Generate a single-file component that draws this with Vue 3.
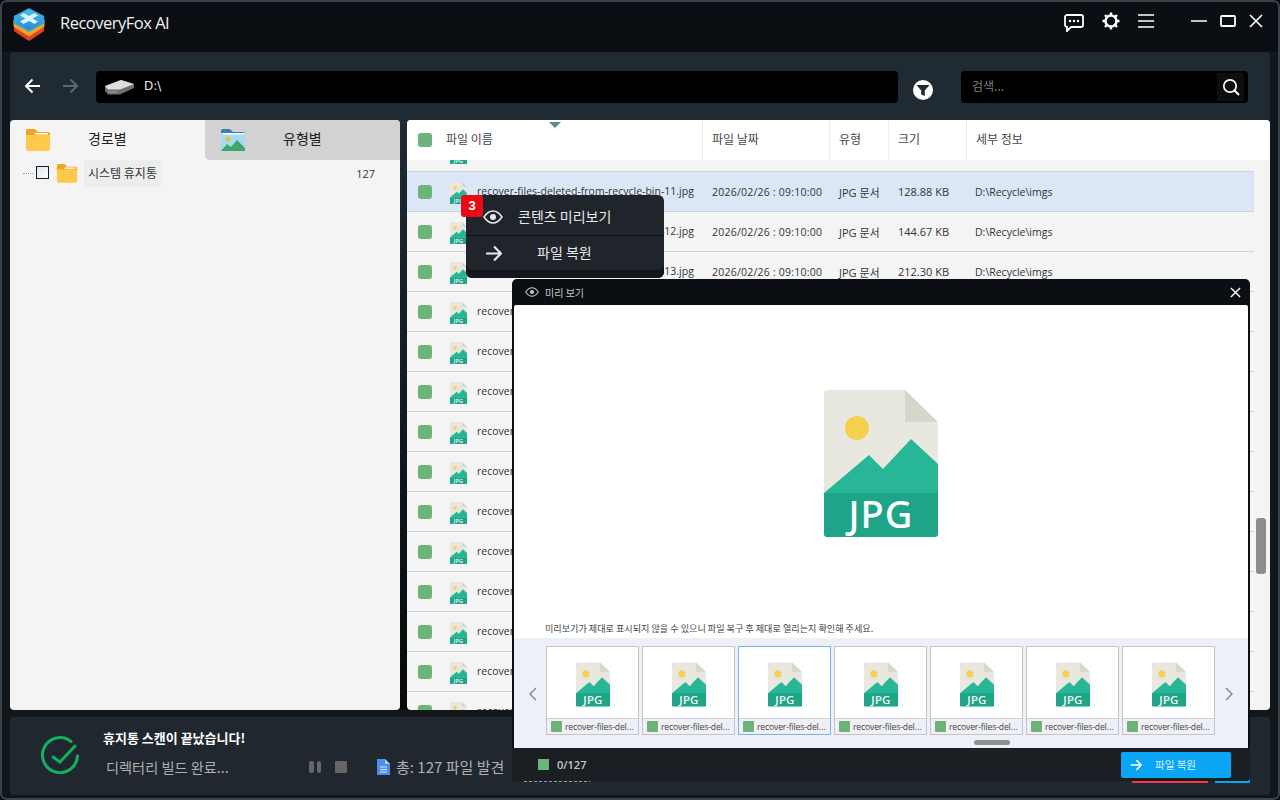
<script setup>
const rows = Array.from({ length: 15 }, (_, i) => ({
  id: i,
  name: `recover-files-deleted-from-recycle-bin-${i + 10}.jpg`,
  size: ['98.41 KB', '128.88 KB', '144.67 KB', '212.30 KB'][i] || '156.20 KB',
  selected: i === 1,
}))
const thumbs = [0, 1, 2, 3, 4, 5, 6]
</script>

<template>
  <div class="app">
    <svg class="defs" width="0" height="0" aria-hidden="true">
      <defs>
        <symbol id="jpg" viewBox="0 0 114 147">
          <path d="M3 0H81L114 33V144a3 3 0 0 1-3 3H3a3 3 0 0 1-3-3V3a3 3 0 0 1 3-3Z" fill="#e9e8e0" />
          <path d="M81 0L114 32H81Z" fill="#d6d6ca" />
          <circle cx="33" cy="38" r="12" fill="#f5d04f" />
          <path d="M0 103L45 65L59 79L87 49L114 74V105H0Z" fill="#28b796" />
          <path d="M0 103H114V144a3 3 0 0 1-3 3H3a3 3 0 0 1-3-3Z" fill="#1ea588" />
          <text x="57" y="138" text-anchor="middle" font-family="Noto Sans, sans-serif" font-size="38" font-weight="500" letter-spacing="1" fill="#fff">JPG</text>
        </symbol>
        <symbol id="folder" viewBox="0 0 26 23">
          <path d="M1 3a2 2 0 0 1 2-2h7l3 3h10a2 2 0 0 1 2 2v3H1Z" fill="#eba51f" />
          <path d="M1 7h24v14a2 2 0 0 1-2 2H3a2 2 0 0 1-2-2Z" fill="#ffc94d" />
          <rect x="10" y="5" width="13" height="1.500" fill="#fff" />
        </symbol>
        <symbol id="eye" viewBox="0 0 20 14">
          <path d="M1 7C4 2.500 7 1 10 1s6 1.500 9 6c-3 4.500-6 6-9 6S4 11.500 1 7Z" fill="none" stroke="currentColor" stroke-width="1.500" />
          <circle cx="10" cy="7" r="3" fill="currentColor" />
        </symbol>
        <symbol id="arrow" viewBox="0 0 16 16">
          <path d="M1 8H15M8.500 1.500L15 8L8.500 14.500" fill="none" stroke="currentColor" stroke-width="2" />
        </symbol>
        <linearGradient id="cube" x1="0" y1="0" x2="0" y2="1">
          <stop offset="0" stop-color="#4cc3ee" />
          <stop offset="1" stop-color="#2386cc" />
        </linearGradient>
      </defs>
    </svg>

    <header class="titlebar">
      <div class="brand">
        <svg class="logo" viewBox="0 0 32 33">
          <path d="M1.500 16V23L16 32.500L30.500 23V16Z" fill="#e2431f" stroke="#e2431f" stroke-linejoin="round" />
          <path d="M1 12V18.500L16 28L31 18.500V12Z" fill="#f4a425" stroke="#f4a425" stroke-linejoin="round" />
          <path d="M16 1L30.500 8.500V15L16 23L1.500 15V8.500Z" fill="url(#cube)" stroke="#38a6e0" stroke-width="1.500" stroke-linejoin="round" />
          <path d="M10.500 5L16 8L21.500 5L25 7.500L19.500 10.500L25 13.500L21.500 16L16 13L10.500 16L7 13.500L12.500 10.500L7 7.500Z" fill="#d9f2fb" />
        </svg>
        <span class="app-name">RecoveryFox AI</span>
      </div>
      <div class="win-tools">
        <svg class="ti chat" viewBox="0 0 20 18"><path d="M3 1H17a2 2 0 0 1 2 2V11a2 2 0 0 1-2 2H7L3 17V13a2 2 0 0 1-2-2V3a2 2 0 0 1 2-2Z" fill="none" stroke="#fff" stroke-width="1.800" /><circle cx="6" cy="7" r="1.200" fill="#fff" /><circle cx="10" cy="7" r="1.200" fill="#fff" /><circle cx="14" cy="7" r="1.200" fill="#fff" /></svg>
        <svg class="ti gear" viewBox="0 0 18 18"><circle cx="9" cy="9" r="5.500" fill="none" stroke="#fff" stroke-width="2.500" /><path d="M9 .5V3M9 15V17.500M.5 9H3M15 9H17.500M3 3L4.800 4.800M13.200 13.200L15 15M15 3L13.200 4.800M4.800 13.200L3 15" stroke="#fff" stroke-width="2.400" /></svg>
        <svg class="ti menu" viewBox="0 0 16 14"><path d="M0 1H16M0 7H16M0 13H16" stroke="#fff" stroke-width="1.500" /></svg>
        <svg class="ti min" viewBox="0 0 16 14"><path d="M0 7H16" stroke="#fff" stroke-width="1.500" /></svg>
        <svg class="ti max" viewBox="0 0 16 12"><rect x="1" y="1" width="14" height="10" rx="1" fill="none" stroke="#fff" stroke-width="1.800" /></svg>
        <svg class="ti close" viewBox="0 0 14 14"><path d="M1 1L13 13M13 1L1 13" stroke="#fff" stroke-width="1.600" /></svg>
      </div>
    </header>

    <main class="main">
      <section class="toolbar">
        <svg class="nav back"><use href="#arrow" /></svg>
        <svg class="nav fwd"><use href="#arrow" /></svg>
        <div class="address">
          <svg class="drive" viewBox="0 0 30 15">
            <path d="M0 6L16 0L29 4V8L15 14.500H3L0 11Z" fill="#6f6f6f" />
            <path d="M0 6L16 0L29 4L15 9.500H3Z" fill="#dedede" />
            <path d="M3 12H12" stroke="#a8a8a8" stroke-width="1" />
          </svg>
          <span class="path">D:\</span>
        </div>
        <span class="filter">
          <svg viewBox="0 0 20 20"><circle cx="10" cy="10" r="10" fill="#fff" /><path d="M3.500 5H16.500L11.800 10.500V16L8.200 14.500V10.500Z" fill="#1f2a33" /></svg>
        </span>
        <div class="search">
          <span class="placeholder">검색...</span>
          <span class="search-btn">
            <svg viewBox="0 0 18 18"><circle cx="8" cy="8" r="6.200" fill="none" stroke="#fff" stroke-width="1.700" /><path d="M12.500 12.500L17 17" stroke="#fff" stroke-width="1.900" /></svg>
          </span>
        </div>
      </section>

      <section class="panels">
        <aside class="left">
          <div class="tabs">
            <div class="tab active">
              <svg class="tab-icon"><use href="#folder" /></svg>
              <span>경로별</span>
            </div>
            <div class="tab inactive">
              <svg class="tab-icon" viewBox="0 0 26 23">
                <path d="M1 3a2 2 0 0 1 2-2h7l3 3h10a2 2 0 0 1 2 2v1H1Z" fill="#3f7cb5" />
                <rect x="1" y="5" width="24" height="18" rx="1" fill="#a3dcef" />
                <rect x="2" y="5" width="22" height="1.500" fill="#fff" />
                <circle cx="8" cy="11" r="2.500" fill="#f5b93d" />
                <path d="M1 23L7 16L11 19L17 12L25 20V23Z" fill="#3da66b" />
              </svg>
              <span>유형별</span>
            </div>
          </div>
          <div class="tree-row">
            <span class="dots"></span>
            <span class="tree-check"></span>
            <svg class="tree-folder"><use href="#folder" /></svg>
            <span class="tree-label">시스템 휴지통</span>
            <span class="tree-count">127</span>
          </div>
        </aside>

        <div class="right">
          <span class="sort"></span>
          <div class="thead">
            <div class="th first"><span class="cb"></span><span>파일 이름</span></div>
            <div class="th"><span>파일 날짜</span></div>
            <div class="th"><span>유형</span></div>
            <div class="th"><span>크기</span></div>
            <div class="th"><span>세부 정보</span></div>
          </div>
          <div class="list">
            <div class="list-inner">
              <div v-for="r in rows" :key="r.id" class="row" :class="{ selected: r.selected }">
                <div class="cell first">
                  <span class="cb"></span>
                  <svg class="file-icon"><use href="#jpg" /></svg>
                  <span class="fname">{{ r.name }}</span>
                </div>
                <div class="cell date">2026/02/26 : 09:10:00</div>
                <div class="cell meta">JPG 문서</div>
                <div class="cell meta">{{ r.size }}</div>
                <div class="cell detail">D:\Recycle\imgs</div>
              </div>
            </div>
            <span class="scroll-thumb"></span>
          </div>
        </div>
      </section>

      <section class="status">
        <svg class="done" viewBox="0 0 38 38">
          <path d="M30 5.500A17.500 17.500 0 1 0 36.500 20" fill="none" stroke="#12b060" stroke-width="3" stroke-linecap="round" />
          <path d="M12 21L19 26L34 10" fill="none" stroke="#12b060" stroke-width="3" stroke-linecap="round" />
        </svg>
        <div class="status-text">
          <strong>휴지통 스캔이 끝났습니다!</strong>
          <div class="status-line">
            <span class="build">디렉터리 빌드 완료...</span>
            <span class="pause"><i></i><i></i></span>
            <span class="stop"></span>
            <svg class="doc" viewBox="0 0 13 16"><path d="M0 0H8L13 5V16H0Z" fill="#4d8fe6" /><path d="M8 0L13 5H8Z" fill="#a9caf5" /><path d="M3 8H10M3 10.500H10M3 13H10" stroke="#d8e6fa" stroke-width="1" /></svg>
            <span class="total">총: 127 파일 발견</span>
          </div>
        </div>
        <span class="sliver"></span>
        <div class="status-btns">
          <span class="btn-red"></span>
          <span class="btn-blue"></span>
        </div>
      </section>
    </main>

    <!-- context menu -->
    <div class="ctx">
      <span class="badge">3</span>
      <div class="ctx-item first">
        <svg class="ctx-eye"><use href="#eye" /></svg>
        <span>콘텐츠 미리보기</span>
      </div>
      <div class="ctx-item second">
        <svg class="ctx-arrow"><use href="#arrow" /></svg>
        <span>파일 복원</span>
      </div>
    </div>

    <!-- preview window -->
    <div class="preview">
      <div class="pv-title">
        <svg class="pv-eye"><use href="#eye" /></svg>
        <span>미리 보기</span>
        <svg class="pv-close" viewBox="0 0 12 12"><path d="M1 1L11 11M11 1L1 11" stroke="#fff" stroke-width="1.500" /></svg>
      </div>
      <div class="pv-body">
        <div class="pv-stage">
          <svg class="pv-big"><use href="#jpg" /></svg>
        </div>
        <p class="pv-note">미리보기가 제대로 표시되지 않을 수 있으니 파일 복구 후 제대로 열리는지 확인해 주세요.</p>
        <div class="strip">
          <svg class="chev" viewBox="0 0 8 14"><path d="M7 1L1 7L7 13" fill="none" stroke="#7c8592" stroke-width="1.400" /></svg>
          <div class="thumbs">
            <div v-for="t in thumbs" :key="t" class="thumb" :class="{ current: t === 2 }">
              <div class="thumb-img"><svg class="thumb-icon"><use href="#jpg" /></svg></div>
              <div class="thumb-cap"><span class="cap-cb"></span><span class="cap-name">recover-files-deleted</span></div>
            </div>
          </div>
          <svg class="chev" viewBox="0 0 8 14"><path d="M1 1L7 7L1 13" fill="none" stroke="#7c8592" stroke-width="1.400" /></svg>
          <span class="strip-scroll"></span>
        </div>
      </div>
      <div class="pv-foot">
        <span class="foot-cb"></span>
        <span class="foot-count">0/127</span>
        <span class="foot-btn">
          <svg><use href="#arrow" /></svg>
          <span>파일 복원</span>
        </span>
      </div>
    </div>
  </div>
</template>

<style>
html, body { margin: 0; background: #0b0e12; }
</style>

<style scoped>
.app {
  position: relative;
  width: 1280px;
  height: 800px;
  box-sizing: border-box;
  border: 2px solid #39444d;
  border-radius: 7px;
  background: #0b0e12;
  overflow: hidden;
  display: flex;
  flex-direction: column;
  font-family: "Noto Sans CJK KR", "Noto Sans", sans-serif;
  color: #333;
}
.defs { position: absolute; }

.titlebar {
  height: 50px;
  flex: none;
  display: flex;
  align-items: center;
  justify-content: space-between;
  background: #0b0e12;
}
.brand { display: flex; align-items: center; margin-left: 11px; margin-top: -6px; }
.logo { width: 32px; height: 33px; }
.app-name {
  margin-left: 15px;
  padding-bottom: 4px;
  font-family: "Open Sans", sans-serif;
  font-size: 16.500px;
  letter-spacing: -0.500px;
  color: #f2f2f2;
}
.win-tools { display: flex; align-items: center; margin-right: 15px; margin-top: -12px; }
.ti { display: block; }
.chat { width: 20px; height: 18px; margin-right: 18px; margin-top: 3px; }
.gear { width: 18px; height: 18px; margin-right: 18px; }
.menu { width: 16px; height: 14px; margin-right: 37px; }
.min { width: 16px; height: 14px; margin-right: 13px; }
.max { width: 16px; height: 12px; margin-right: 13px; }
.close { width: 14px; height: 14px; }

.main {
  flex: 1;
  min-height: 0;
  display: flex;
  flex-direction: column;
  padding: 0 8px 3px;
  background: #12171c;
}

.toolbar {
  height: 68px;
  box-sizing: border-box;
  flex: none;
  display: flex;
  align-items: center;
  background: #1f2a33;
  border-radius: 4px 4px 0 0;
  padding-top: 2px;
}
.nav { width: 16px; height: 16px; flex: none; margin-top: -3px; }
.back { color: #fff; margin-left: 15px; transform: scaleX(-1); }
.fwd { color: #5d666e; margin-left: 21px; }
.address {
  margin-left: 18px;
  width: 802px;
  height: 32px;
  background: #000;
  border-radius: 4px;
  display: flex;
  align-items: center;
}
.drive { width: 30px; height: 15px; margin-left: 9px; margin-top: 1px; }
.path { margin-left: 9px; padding-bottom: 2px; font-size: 12px; color: #e6e6e6; font-family: "DejaVu Sans", sans-serif; }
.filter { width: 20px; height: 20px; margin-left: 15px; margin-top: 5px; }
.filter svg { display: block; width: 20px; height: 20px; }
.search {
  margin-left: 28px;
  width: 287px;
  height: 32px;
  background: #000;
  border-radius: 4px;
  display: flex;
  align-items: center;
  justify-content: space-between;
}
.placeholder { margin-left: 11px; padding-bottom: 3px; font-size: 12px; color: #7d7d7d; }
.search-btn { width: 27px; height: 28px; margin-right: 4px; background: #0e0e0e; display: flex; align-items: center; justify-content: center; }
.search-btn svg { width: 18px; height: 18px; }

.panels {
  height: 590px;
  flex: none;
  display: flex;
  gap: 7px;
  background: linear-gradient(#1f2a33, #05090b);
}
.left {
  width: 390px;
  flex: none;
  background: #f4f4f4;
  border-radius: 4px;
  overflow: hidden;
}
.tabs { display: flex; height: 40px; }
.tab { display: flex; align-items: center; width: 195px; font-size: 14px; color: #222; }
.tab.inactive { background: #d2d2d2; border-radius: 0 0 0 5px; }
.tab-icon { width: 26px; height: 23px; margin-left: 15px; margin-top: -2px; flex: none; }
.tab span { margin-left: 37px; padding-bottom: 5px; }
.tree-row { display: flex; align-items: center; height: 27px; }
.dots { width: 10px; margin-left: 13px; border-top: 1px dotted #999; }
.tree-check { width: 11px; height: 11px; margin-left: 3px; margin-top: -2px; border: 1px solid #0f1c33; background: linear-gradient(135deg, #dfe4ec, #fff); flex: none; }
.tree-folder { width: 22px; height: 20px; margin-left: 7px; margin-top: -1px; flex: none; }
.tree-label { margin-left: 6px; padding: 0 4px; height: 27px; line-height: 25px; font-size: 12px; background: #ededed; color: #333; }
.tree-count { margin-left: auto; margin-right: 25px; font-size: 11px; color: #333; font-family: "Open Sans", sans-serif; }

.right {
  position: relative;
  width: 863px;
  flex: none;
  background: #f4f4f4;
  border-radius: 4px;
  overflow: hidden;
  display: flex;
  flex-direction: column;
}
.sort {
  position: absolute;
  left: 142px;
  top: 2px;
  border-left: 6px solid transparent;
  border-right: 6px solid transparent;
  border-top: 6px solid #5f8a90;
}
.thead, .row {
  display: grid;
  grid-template-columns: 295px 127px 59px 78px 1fr;
}
.thead { height: 40px; flex: none; background: #fff; font-size: 12px; color: #444; }
.th { display: flex; align-items: center; padding-left: 9px; border-left: 1px solid #e3edf2; }
.th > span { padding-bottom: 3px; }
.th.first { padding-left: 11px; border-left: 0; }
.th.first > span:last-child { margin-left: 14px; }
.cb { width: 14px; height: 14px; border-radius: 3px; background: #6db37a; flex: none; padding: 0 !important; }
.list { position: relative; flex: 1; min-height: 0; overflow: hidden; }
.list-inner { margin-top: -28px; width: 847px; }
.row {
  height: 40px;
  box-sizing: border-box;
  border-bottom: 1px solid #c9d3dc;
  font-size: 10.500px;
  color: #333;
}
.row.selected { background: #dbe7f6; }
.cell { display: flex; align-items: center; padding-left: 9px; white-space: nowrap; font-family: "Open Sans", "Noto Sans CJK KR", sans-serif; }
.cell.first { padding-left: 11px; overflow: hidden; }
.cell.date { padding-left: 10px; letter-spacing: 0.220px; }
.cell.meta { padding-left: 10px; font-size: 11px; }
.cell.detail { padding-left: 9px; }
.file-icon { width: 17px; height: 22px; margin-left: 18px; margin-top: 2px; flex: none; }
.fname { margin-left: 10px; padding-bottom: 1px; }
.scroll-thumb {
  position: absolute;
  right: 4px;
  top: 358px;
  width: 10px;
  height: 56px;
  border-radius: 3px;
  background: #8d8d8d;
}

.status {
  height: 78px;
  margin-top: 7px;
  flex: none;
  position: relative;
  display: flex;
  align-items: center;
  background: #20272e;
  border-radius: 4px;
}
.done { width: 38px; height: 38px; margin-left: 31px; margin-top: -3px; flex: none; }
.status-text { margin-left: 24px; display: flex; flex-direction: column; }
.status-text strong { font-size: 13px; color: #fff; font-weight: 700; line-height: 18px; margin-top: -7px; }
.status-line { display: flex; align-items: center; margin-top: 11px; margin-left: 3px; font-size: 14.200px; color: #b0b0b0; line-height: 18px; }
.build { width: 203px; }
.pause { display: flex; gap: 3px; width: 26px; }
.pause i { width: 4.500px; height: 12px; background: #666; border-radius: 2px; }
.stop { width: 12px; height: 12px; background: #666; border-radius: 1px; margin-right: 30px; }
.doc { width: 13px; height: 16px; margin-right: 6px; }
.total { white-space: nowrap; font-size: 15px; }
.sliver {
  position: absolute;
  left: 514px;
  top: 64px;
  width: 66px;
  height: 1px;
  background: repeating-linear-gradient(90deg, #9a9a9a 0 3px, transparent 3px 5px);
}
.status-btns { position: absolute; left: 1122px; top: 36px; display: flex; gap: 7px; }
.btn-red { width: 76px; height: 30px; background: #ef3b4a; }
.btn-blue { width: 35px; height: 30px; background: #0aa5f5; }

.ctx {
  position: absolute;
  left: 464px;
  top: 193px;
  width: 198px;
  height: 83px;
  background: #20252b;
  border-radius: 6px;
  color: #e8e8e8;
  font-size: 14px;
  box-shadow: inset 0 -8px 0 #14171b;
}
.badge {
  position: absolute;
  left: -5px;
  top: 0;
  width: 22px;
  height: 22px;
  background: #e80b14;
  border-radius: 3px;
  color: #fff;
  font-size: 13px;
  font-weight: 700;
  text-align: center;
  line-height: 22px;
  font-family: "Liberation Sans", sans-serif;
}
.ctx-item { display: flex; align-items: center; height: 41px; box-sizing: border-box; }
.ctx-item.first { border-bottom: 1px solid #0f1114; padding-top: 3px; }
.ctx-item.first span { margin-left: 15px; padding-bottom: 2px; }
.ctx-item.second { height: 34px; }
.ctx-eye { width: 20px; height: 14px; margin-left: 17px; flex: none; }
.ctx-arrow { width: 17px; height: 17px; margin-left: 19px; flex: none; }
.ctx-item.second span { margin-left: 35px; padding-bottom: 2px; }

.preview {
  position: absolute;
  left: 510px;
  top: 277px;
  width: 738px;
  height: 502px;
  box-sizing: border-box;
  background: #0b0e12;
  display: flex;
  flex-direction: column;
  border-radius: 5px 5px 4px 4px;
}
.pv-title {
  height: 26px;
  flex: none;
  display: flex;
  align-items: center;
  font-size: 10px;
  color: #c8c8c8;
  position: relative;
}
.pv-eye { width: 14px; height: 10px; margin-left: 13px; margin-right: 6px; color: #c8c8c8; }
.pv-close { position: absolute; right: 9px; top: 8px; width: 11px; height: 11px; }
.pv-body {
  flex: none;
  height: 443px;
  margin: 0 2px;
  background: #fff;
  display: flex;
  flex-direction: column;
  border-radius: 2px 2px 0 0;
}
.pv-stage { height: 318px; flex: none; display: flex; align-items: flex-start; justify-content: center; }
.pv-big { width: 114px; height: 147px; margin-top: 85px; margin-left: -1px; }
.pv-note { margin: 0; height: 15px; padding-left: 31px; font-size: 9.100px; line-height: 10px; color: #444; white-space: nowrap; }
.strip { flex: 1; position: relative; background: #eef0f8; display: flex; align-items: flex-start; padding-top: 8px; }
.chev { width: 8px; height: 14px; flex: none; margin-top: 41px; }
.chev:first-child { margin-left: 15px; margin-right: 9px; }
.chev:nth-child(3) { margin-left: 10px; }
.thumbs { display: flex; gap: 3px; }
.thumb {
  width: 93px;
  height: 89px;
  box-sizing: border-box;
  border: 1px solid #c4c4cc;
  display: flex;
  flex-direction: column;
  background: #fff;
}
.thumb.current { border-color: #79b2ee; }
.thumb-img { height: 71px; flex: none; display: flex; justify-content: center; align-items: center; }
.thumb-icon { width: 34px; height: 45px; margin-top: 4px; }
.thumb-cap { flex: 1; display: flex; align-items: center; background: #eef0f6; border-top: 1px solid #d0d0d8; padding-left: 4px; padding-right: 1px; min-width: 0; overflow: hidden; }
.cap-cb { width: 11px; height: 11px; background: #6db37a; border-radius: 1px; flex: none; margin-right: 3px; }
.cap-name { font-family: "Open Sans", sans-serif; font-size: 8.600px; letter-spacing: -0.150px; color: #444; white-space: nowrap; overflow: hidden; text-overflow: ellipsis; }
.strip-scroll { position: absolute; left: 460px; bottom: 3px; width: 36px; height: 5px; border-radius: 3px; background: #8f8f8f; }
.pv-foot { flex: 1; display: flex; align-items: center; background: #1a1f24; border-radius: 0 0 4px 4px; color: #c8c8c8; font-size: 11px; position: relative; }
.foot-cb { width: 11px; height: 11px; background: #6db37a; margin-left: 26px; flex: none; }
.foot-count { margin-left: 8px; font-family: "Open Sans", sans-serif; font-weight: 600; }
.foot-btn {
  margin-left: auto;
  margin-right: 19px;
  width: 110px;
  height: 26px;
  background: #0aa5f5;
  border-radius: 2px;
  display: flex;
  align-items: center;
  color: #d9f0fd;
  font-size: 10.500px;
}
.foot-btn svg { width: 12px; height: 12px; margin-left: 9px; margin-right: 13px; color: #fff; }
</style>
